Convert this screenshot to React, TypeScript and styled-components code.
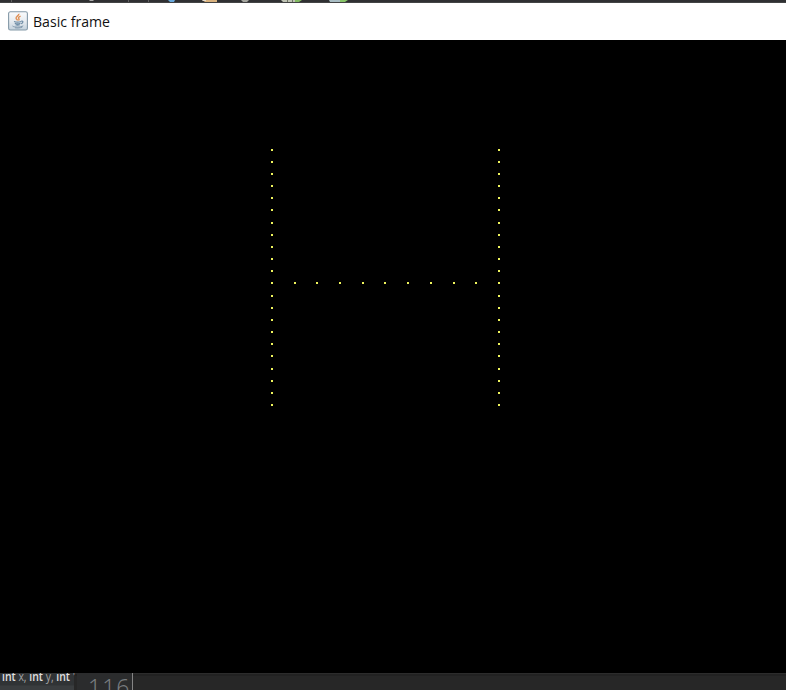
import React from "react";
import styled, { createGlobalStyle } from "styled-components";

const GlobalStyle = createGlobalStyle`
  html, body { margin: 0; padding: 0; background: #000; overflow: hidden; }
`;

const Screen = styled.div`
  display: flex;
  flex-direction: column;
  width: 786px;
  height: 690px;
  overflow: hidden;
  background: #000;
`;

const EditorToolbar = styled.div`
  flex: none;
  height: 3px;
  background: #2f3032;
  svg { display: block; }
`;

const TitleBar = styled.header`
  flex: none;
  display: flex;
  align-items: center;
  gap: 5px;
  box-sizing: border-box;
  height: 37px;
  padding: 0 8px 1px;
  background: #fff;
`;

const Title = styled.span`
  font: 15px/20px "Open Sans", "Noto Sans", sans-serif;
  color: #111;
  white-space: nowrap;
`;

const FitText = styled.span<{ $scale: number }>`
  display: inline-block;
  transform: scaleX(${(p) => p.$scale});
  transform-origin: left center;
`;

const Canvas = styled.main`
  flex: none;
  height: 633px;
  background: #000;
  svg { display: block; }
`;

const EditorStrip = styled.footer`
  flex: none;
  display: flex;
  height: 17px;
  overflow: hidden;
  background: #272727;
  box-shadow: inset 0 1px #2c2c2c, inset 0 3px #222;
`;

const Hint = styled.div`
  flex: none;
  box-sizing: border-box;
  width: 74px;
  height: 17px;
  padding-left: 2px;
  background: linear-gradient(#303335 0, #303335 12px, #3a3d3f 13px);
  color: #a0a2a3;
  font: 12px/8px "Open Sans", sans-serif;
  margin-right: 3px;
  white-space: nowrap;
  b { font-weight: 600; color: #e0e0e0; }
`;

const Gutter = styled.div`
  flex: none;
  box-sizing: border-box;
  width: 56px;
  height: 17px;
  padding-left: 11px;
  border-right: 1px solid #858585;
  background: #2b2c2d;
  color: #777b7e;
  font: 300 23px/28px "Noto Sans", "Open Sans", sans-serif;
  letter-spacing: 1px;
`;

const stemRows = [
  149, 161, 173, 185, 197, 209, 222, 234, 246, 258, 270,
  282, 295, 307, 319, 331, 343, 355, 368, 380, 392, 404,
];
const barColumns = [294, 316, 339, 362, 384, 407, 430, 453, 475];
const points: [number, number][] = [
  ...stemRows.flatMap((y): [number, number][] => [[271, y], [498, y]]),
  ...barColumns.map((x): [number, number] => [x, 282]),
];

function ToolbarIcons() {
  return (
    <svg width="786" height="3">
      <rect width="786" height="1" y="2" fill="#434445" />
      <path d="M11.5 0v2M128.500 0v2M148.500 0v2" stroke="#606162" />
      <path d="M89 0h5l-1 1h-3z" fill="#aaa" />
      <path d="M168 0h7l-1 2h-4z" fill="#68a8dc" />
      <path d="M202 0h15v2h-12z" fill="#d9b27e" />
      <path d="M202 0h4v1h-3z" fill="#e4dccf" />
      <path d="M241 0h8l-2 2h-4z" fill="#a5a69f" />
      <path d="M281 0h14v2h-12z" fill="#bfc3b4" />
      <path d="M287.500 0v2M292.500 0v2" stroke="#6d7463" />
      <path d="M295 0h7l-3 2h-4z" fill="#82ba62" />
      <path d="M329 0h11v2h-10z" fill="#a9bdc4" />
      <path d="M340 0h8l-3 2h-5z" fill="#87c568" />
    </svg>
  );
}

function JavaIcon() {
  return (
    <svg width="20" height="20" viewBox="0 0 20 20" fill="none">
      <defs>
        <linearGradient id="tile" x1="0" y1="0" x2="0" y2="1">
          <stop offset="0" stopColor="#fafbfc" />
          <stop offset=".5" stopColor="#e8edf1" />
          <stop offset="1" stopColor="#c3d1dc" />
        </linearGradient>
      </defs>
      <rect x=".6" y=".8" width="18.800" height="18.200" rx="1.800" fill="url(#tile)" stroke="#8499a8" strokeWidth="1.100" />
      <path d="M10.800 2.800c.7 1.700-3.300 2.500-2.700 4.500.2.900 1.300 1.200 1.300 2.200M12.600 5.200c-2 .8-2.600 1.500-1.700 2.600.5.700.1 1.200-.4 1.700" stroke="#e08f55" strokeWidth="1.400" />
      <path d="M6 10.500c1.500.6 5.400.6 7.200 0M6.800 12.200c1.500.6 4.300.6 5.700 0M7.500 13.800c1.300.4 3.100.4 4.300 0M13.300 10.200c2.500-.4 1.700 2-.2 2.400" stroke="#6f8da6" strokeWidth="1.200" />
      <path d="M4.500 15c1.500 1.500 8.500 1.500 10.700-.2M7 16.800c2.500.4 5 .2 7.300-.7" stroke="#8299ad" />
    </svg>
  );
}

export default function App() {
  return (
    <>
      <GlobalStyle />
      <Screen>
        <EditorToolbar><ToolbarIcons /></EditorToolbar>
        <TitleBar>
          <JavaIcon />
          <Title><FitText $scale={0.94}>Basic frame</FitText></Title>
        </TitleBar>
        <Canvas>
          <svg width="786" height="633" viewBox="0 40 786 633" shapeRendering="crispEdges">
            {points.map(([x, y]) => (
              <rect key={`${x}-${y}`} x={x} y={y} width="2" height="2" fill="#eef35c" />
            ))}
          </svg>
        </Canvas>
        <EditorStrip>
          <Hint><FitText $scale={0.87}><b>int</b> x, <b>int</b> y, <b>int</b> &apos;</FitText></Hint>
          <Gutter>116</Gutter>
        </EditorStrip>
      </Screen>
    </>
  );
}
